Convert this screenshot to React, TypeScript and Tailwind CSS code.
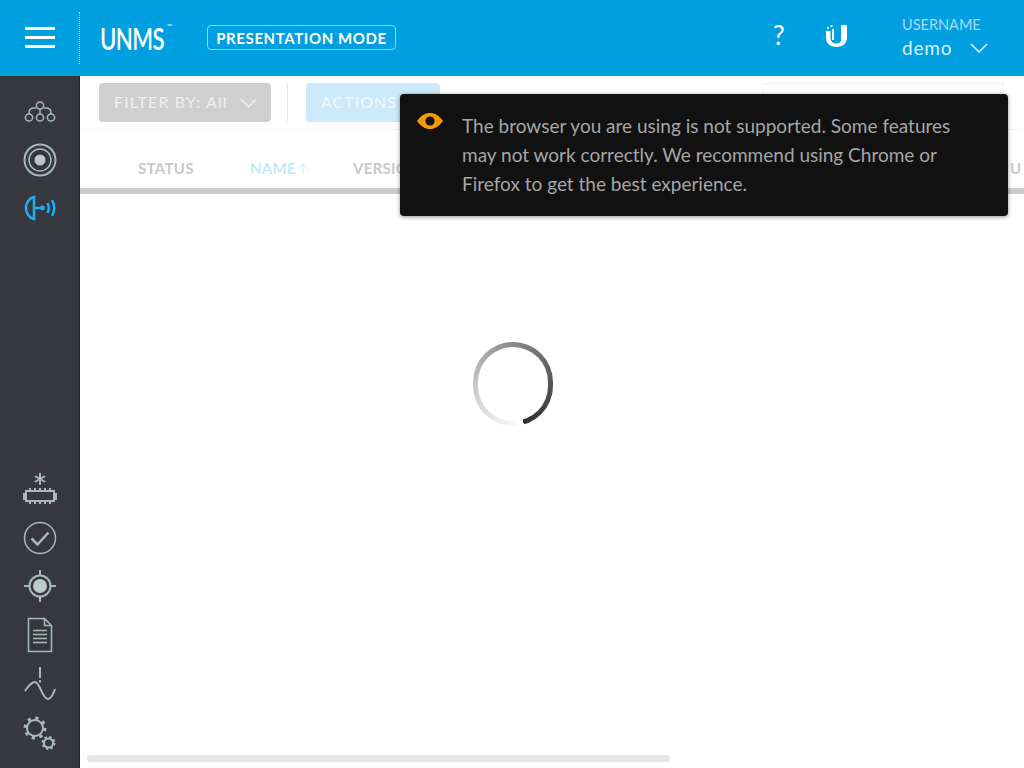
import { ArrowUp } from 'lucide-react'

const iconClass = 'w-10 h-10 fill-none stroke-[#a9bab9] stroke-[1.5]'

function Chevron({ className }: { className: string }) {
  return (
    <svg viewBox="0 0 18 10" className={`fill-none stroke-current stroke-[1.6] ${className}`}>
      <path d="M1 1 L9 9 L17 1" />
    </svg>
  )
}

function NetworkIcon() {
  return (
    <svg viewBox="0 0 40 40" className={iconClass}>
      <circle cx="9" cy="25.5" r="3.6" />
      <circle cx="20" cy="25.5" r="3.6" />
      <circle cx="31" cy="25.5" r="3.6" />
      <circle cx="20" cy="13.5" r="3.6" />
      <path d="M9 22 v-1 q0-5 5-5 h2.5 M23.5 16 h2.5 q5 0 5 5 v1 M20 17 v5" />
    </svg>
  )
}

function TargetIcon() {
  return (
    <svg viewBox="0 0 40 40" className={iconClass}>
      <circle cx="20" cy="20" r="15.5" className="stroke-2" />
      <circle cx="20" cy="20" r="11" />
      <circle cx="20" cy="20" r="5.5" className="fill-[#b9cac9] stroke-none" />
    </svg>
  )
}

function AntennaIcon() {
  return (
    <svg viewBox="0 0 40 40" className="w-10 h-10 fill-none stroke-[#1ab0f5] stroke-[2.5]">
      <path d="M14 9 C9 10 6 15 6 20 C6 25 9 30 14 31 Z" />
      <path d="M14 20 H22" />
      <circle cx="22.5" cy="20" r="2.4" className="fill-[#1ab0f5] stroke-none" />
      <path d="M27.5 15 q2.6 5 0 10 M32 12 q4.4 8 0 16" />
    </svg>
  )
}

function ChipIcon() {
  return (
    <svg viewBox="0 0 40 40" className={iconClass}>
      <path d="M20 3 v12 M14.8 6 l10.4 6 M25.2 6 l-10.4 6" className="stroke-2" />
      <rect x="6" y="21" width="28" height="10" className="stroke-2" />
      <path d="M5 24 h-1 v5 h1 M35 24 h1 v5 h-1 M10 18 v3 M15 18 v3 M20 18 v3 M25 18 v3 M30 18 v3 M10 31 v3 M15 31 v3 M20 31 v3 M25 31 v3 M30 31 v3" className="stroke-2" />
    </svg>
  )
}

function CheckIcon() {
  return (
    <svg viewBox="0 0 40 40" className={iconClass}>
      <circle cx="20" cy="20" r="15.5" />
      <path d="M11.5 20.5 l6 6 l11-12" className="stroke-[2.5]" />
    </svg>
  )
}

function CrosshairIcon() {
  return (
    <svg viewBox="0 0 40 40" className={iconClass}>
      <circle cx="20" cy="20" r="10.5" className="stroke-2" />
      <circle cx="20" cy="20" r="7" className="fill-[#b9cac9] stroke-none" />
      <path d="M20 4 v5.5 M20 30.5 v5.5 M4 20 h5.5 M30.5 20 h5.5" className="stroke-2" />
    </svg>
  )
}

function DocIcon() {
  return (
    <svg viewBox="0 0 40 40" className={iconClass}>
      <path d="M8.5 3.5 H24.5 L31.5 10.5 V36.5 H8.5 Z M24.5 3.5 V10.5 H31.5" />
      <path d="M13 15.5 h14 M13 19.5 h14 M13 23.5 h14 M13 27.5 h14" />
    </svg>
  )
}

function WaveIcon() {
  return (
    <svg viewBox="0 0 40 40" className={iconClass}>
      <path d="M20 3 V14 M20 16 V18.5" className="stroke-2" />
      <path d="M5 27 C9 21 12 18 15 18 C20 18 22 35 28 35 C31 35 33 31 35 25" className="stroke-2" />
    </svg>
  )
}

function GearsIcon() {
  return (
    <svg viewBox="0 0 40 40" className={iconClass}>
      <circle cx="15" cy="15" r="8" className="stroke-2" />
      <circle cx="15" cy="15" r="10" strokeDasharray="3.2 4.65" className="stroke-[3]" />
      <circle cx="28.5" cy="30" r="4.5" className="stroke-2" />
      <circle cx="28.5" cy="30" r="6" strokeDasharray="2.4 2.3" className="stroke-2" />
    </svg>
  )
}

function UbntLogo() {
  return (
    <svg viewBox="0 0 21 22" className="w-[21px] h-[22px] fill-white">
      <path d="M15 0 H21 V12 C21 18.5 17 22 10.5 22 C4 22 0 18.5 0 12 V6 H4.5 V13 C4.5 16.5 7 18.5 10.5 18.5 C13 18.5 15 17.5 15 15 Z" />
      <rect x="6" y="4" width="2" height="11" />
      <rect x="1" y="2" width="2" height="2" />
      <rect x="4.5" y="0" width="2" height="2" />
    </svg>
  )
}

function EyeIcon() {
  return (
    <svg viewBox="0 0 26 16" className="w-[26px] h-4">
      <path d="M0 8 C4 2.5 8 0 13 0 C18 0 22 2.5 26 8 C22 13.5 18 16 13 16 C8 16 4 13.5 0 8 Z" className="fill-[#f29b05]" />
      <circle cx="13" cy="8" r="4.6" className="fill-[#111111]" />
    </svg>
  )
}

export default function App() {
  return (
    <div className="relative w-[1024px] h-[768px] overflow-hidden bg-white font-['Lato',sans-serif]">
      {/* Top bar */}
      <header className="h-[76px] bg-[#00a0e0] flex items-center text-white">
        <div className="w-20 h-full flex items-center justify-center">
          <div className="w-[30px] flex flex-col gap-1.5 -mt-px">
            <div className="h-[3px] bg-white" />
            <div className="h-[3px] bg-white" />
            <div className="h-[3px] bg-white" />
          </div>
        </div>
        <div className="h-[52px] border-l border-dotted border-[#9fdcf5] -ml-px" />
        <div className="w-[107px] ml-5 flex items-start">
          <span className="text-[30px] leading-none font-semibold scale-x-[0.74] origin-left tracking-tight">UNMS</span>
          <span className="text-[7px] leading-none -ml-[20px] mt-0">™</span>
        </div>
        <div className="w-[189px] h-[25px] -mt-[1px] pt-px rounded border border-[#8ed6f3] flex items-center justify-center text-[15px] font-bold tracking-[0.6px]">
          PRESENTATION MODE
        </div>
        <div className="ml-[377px] text-[26px] leading-none w-[53px] -mt-1.5">?</div>
        <div className="-mt-[4px] w-[76px]">
          <UbntLogo />
        </div>
        <div className="w-[85px] -mt-px">
          <div className="text-[14.5px] leading-5 text-[#a3dcf5]">USERNAME</div>
          <div className="flex items-center justify-between leading-6 mt-px">
            <span className="text-[19px] tracking-[0.8px] text-[#d7f1fb]">demo</span>
            <Chevron className="w-[18px] h-2.5 text-[#d7f1fb] -mr-px" />
          </div>
        </div>
      </header>

      <div className="flex h-[692px]">
        {/* Sidebar */}
        <nav className="w-20 bg-[#36383d] border-r border-[#26272a] flex flex-col justify-between items-center pt-3 pb-[11px]">
          <div className="flex flex-col">
            <div className="h-12 flex items-center justify-center"><NetworkIcon /></div>
            <div className="h-12 flex items-center justify-center"><TargetIcon /></div>
            <div className="h-12 flex items-center justify-center"><AntennaIcon /></div>
          </div>
          <div className="flex flex-col">
            <div className="h-12 flex items-center justify-center"><ChipIcon /></div>
            <div className="h-12 flex items-center justify-center"><CheckIcon /></div>
            <div className="h-12 flex items-center justify-center"><CrosshairIcon /></div>
            <div className="h-[49px] flex items-center justify-center"><DocIcon /></div>
            <div className="h-[50px] flex items-center justify-center"><WaveIcon /></div>
            <div className="h-12 flex items-center justify-center"><GearsIcon /></div>
          </div>
        </nav>

        {/* Content */}
        <main className="flex-1 min-w-0 overflow-hidden">
          <div className="h-[54px] border-b border-[#f3f3f3] flex items-start pt-[7px] pl-[19px]">
            <div className="w-[172px] h-[39px] pb-0.5 rounded bg-[#cfcfcf] flex items-center pl-[15px] pr-[14px] justify-between text-[#f0f0f0] text-base tracking-[1.1px]">
              <span>FILTER BY: All</span>
              <Chevron className="w-[17px] h-2.5 mt-0.5" />
            </div>
            <div className="h-[39px] ml-4 border-l border-dotted border-[#cfcfcf]" />
            <div className="w-[134px] h-[39px] pb-0.5 ml-[18px] rounded bg-[#cceafa] flex items-center pl-[15px] text-[#f0f9fe] text-base tracking-[1px]">
              ACTIONS
            </div>
            <div className="w-[241px] h-10 ml-[323px] border border-[#f3f3f3]" />
          </div>

          <div className="h-[64px] border-b-[6px] border-[#cccccc] flex items-center pt-[19px] pl-[58px] text-[15px] font-bold text-[#c9c9c9] tracking-[0.3px] whitespace-nowrap">
            <span className="w-[112px] shrink-0">STATUS</span>
            <span className="w-[103px] shrink-0 flex items-center text-[#c5e9f9]">
              NAME
              <ArrowUp size={16} strokeWidth={1.4} className="-ml-[1px]" />
            </span>
            <span className="w-[657px] shrink-0">VERSION</span>
            <span className="shrink-0">U</span>
          </div>

          <div className="w-[866px] flex justify-center pt-[148px]">
            {/* Loading spinner */}
            <div className="w-[80px] h-[84px] rounded-full bg-[conic-gradient(from_165deg,#ffffff_0%,#c8c8c8_29%,#8a8a8a_54%,#555558_79%,#2f3136_100%)] flex items-center justify-center">
              <div className="w-[70px] h-[74px] rounded-full bg-white" />
            </div>
          </div>
        </main>
      </div>

      {/* Horizontal scrollbar */}
      <div className="absolute left-[87px] top-[755px] w-[583px] h-[7px] rounded bg-[#e6e6e6]" />

      {/* Browser warning toast */}
      <div className="absolute left-[400px] top-[94px] w-[608px] h-[122px] rounded bg-[#111111] shadow-[0_1px_4px_rgba(0,0,0,0.45)] flex pl-[17px] pt-[17px]">
        <div className="w-[45px] pt-0.5">
          <EyeIcon />
        </div>
        <p className="text-[19px] leading-[29px] text-[#a6a6a6]">
          The browser you are using is not supported. Some features
          <br />
          may not work correctly. We recommend using Chrome or
          <br />
          Firefox to get the best experience.
        </p>
      </div>
    </div>
  )
}
